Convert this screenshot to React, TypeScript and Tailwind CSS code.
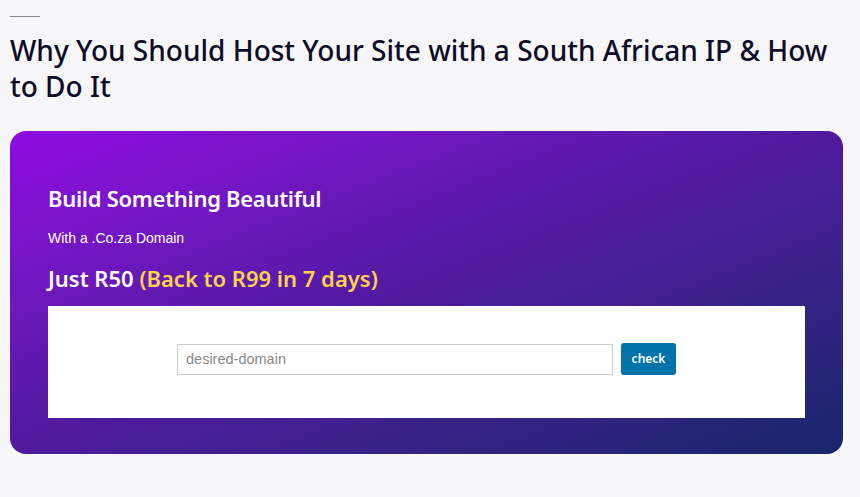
import React from "react";

export default function App() {
  return (
    <div
      className="min-h-screen w-full bg-[#f7f7f9] px-[10px] pt-[16px] pb-[40px]"
      style={{ fontFamily: '"Noto Sans", "Open Sans", sans-serif' }}
    >
      {/* Top rule + heading */}
      <div className="h-px w-[30px] bg-[#8a8a8a]" />
      <h1 className="mt-[15px] text-[28px] font-medium leading-[36px] text-[#0f0c29]">
        Why You Should Host Your Site with a South African IP &amp; How to Do It
      </h1>

      {/* Promo card */}
      <div className="mt-[27px] w-[833px] rounded-[16px] bg-gradient-to-br from-[#900ae2] via-[#4f1a9e] to-[#15266a] px-[38px] pt-[52px] pb-[36px]">
        <h2 className="text-[22px] font-semibold leading-[30px] tracking-[-0.3px] text-white">
          Build Something Beautiful
        </h2>
        <p
          className="mt-[16px] text-[14px] leading-[18px] text-white"
          style={{ fontFamily: '"Liberation Sans", Arial, sans-serif' }}
        >
          With a .Co.za Domain
        </p>
        <p className="mt-[17px] text-[22px] font-semibold leading-[28px] text-[#fcd34d]">
          <span className="text-white">Just R50</span> (Back to R99 in 7 days)
        </p>

        <div className="mt-[14px] flex h-[112px] items-center justify-center gap-[8px] bg-white pb-[6px]">
          <input
            type="text"
            placeholder="desired-domain"
            className="h-[31px] w-[436px] border border-[#cccccc] px-[8px] text-[14.5px] text-[#333] placeholder:text-[#8a8a8a] outline-none"
            style={{ fontFamily: '"Liberation Sans", Arial, sans-serif' }}
          />
          <button className="h-[32px] w-[55px] rounded-[3px] bg-[#0073aa] text-[12px] font-semibold text-white">
            check
          </button>
        </div>
      </div>
    </div>
  );
}
